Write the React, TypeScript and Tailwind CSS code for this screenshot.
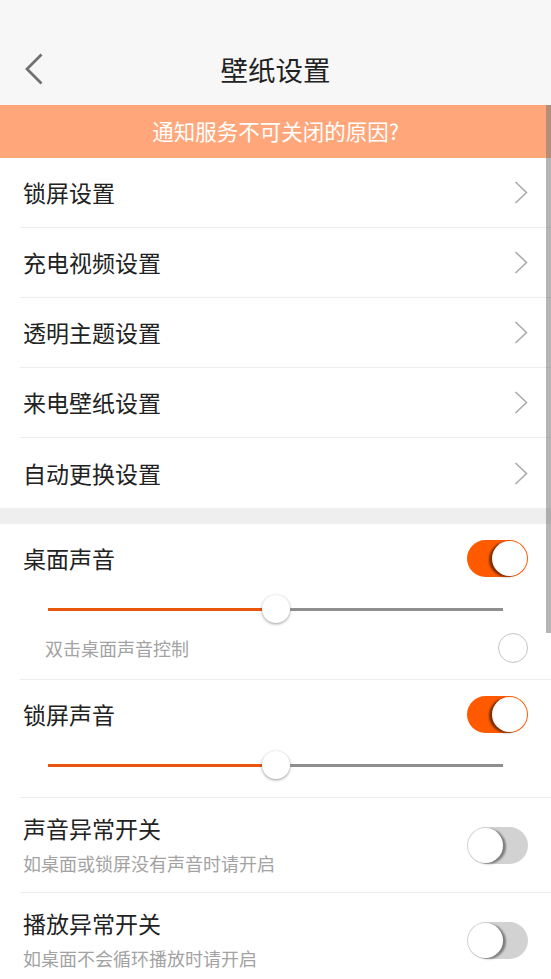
import { useState } from "react";

const font = { fontFamily: '"Noto Sans CJK SC", "Noto Sans", sans-serif' };

const links = ["锁屏设置", "充电视频设置", "透明主题设置", "来电壁纸设置", "自动更换设置"];

function Chevron() {
  return (
    <svg width="14" height="23" viewBox="0 0 14 23" fill="none">
      <path d="M1.5 1 L12.5 11.5 L1.5 22" stroke="#ababab" strokeWidth="1.6" />
    </svg>
  );
}

function Toggle({ on, onClick }: { on: boolean; onClick: () => void }) {
  return (
    <button
      onClick={onClick}
      className={
        "relative h-[37px] w-[61px] shrink-0 rounded-full " + (on ? "bg-[#ff5a00]" : "bg-[#d2d2d2]")
      }
    >
      <span
        className={
          "absolute top-[1px] h-[35px] w-[35px] rounded-full bg-white " +
          (on
            ? "right-[1px] shadow-[-3px_1px_2px_rgba(0,0,0,0.5)]"
            : "left-[1px] shadow-[3px_1px_2px_rgba(0,0,0,0.4)]")
        }
      />
    </button>
  );
}

function Slider() {
  return (
    <div className="flex h-[30px] items-center pl-[48px] pr-[48px]">
      <div className="h-[3px] flex-1 bg-[#e9560e]" />
      <div className="h-[28px] w-[28px] shrink-0 rounded-full bg-white shadow-[0_1px_3px_rgba(0,0,0,0.4)]" />
      <div className="h-[3px] flex-1 bg-[#8f8f8f]" />
    </div>
  );
}

function SwitchRow({
  title,
  sub,
  on,
  onClick,
  last,
}: {
  title: string;
  sub: string;
  on: boolean;
  onClick: () => void;
  last?: boolean;
}) {
  return (
    <div className="pl-[20px]">
      <div
        className={
          "flex h-[95px] items-center justify-between pl-[3px] pr-[23px] " +
          (last ? "" : "border-b border-[#ececec]")
        }
      >
        <div className="flex flex-col">
          <span className="text-[23px] leading-[30px]">{title}</span>
          <span className="mt-[5px] text-[18px] leading-[30px] text-[#a3a3a3]">{sub}</span>
        </div>
        <Toggle on={on} onClick={onClick} />
      </div>
    </div>
  );
}

export default function App() {
  const [desk, setDesk] = useState(true);
  const [lock, setLock] = useState(true);
  const [snd, setSnd] = useState(false);
  const [play, setPlay] = useState(false);
  const [dbl, setDbl] = useState(false);

  return (
    <div className="relative h-[979px] w-[551px] overflow-hidden bg-white text-[#222]" style={font}>
      {/* header */}
      <div className="flex h-[105px] items-end bg-[#f7f7f7] pb-[18px]">
        <div className="relative flex h-[34px] w-full items-center justify-center">
          <svg className="absolute left-[24px] top-[0px]" width="20" height="32" viewBox="0 0 20 32" fill="none">
            <path d="M17.5 1.5 L3 16 L17.5 30.5" stroke="#707070" strokeWidth="2.8" />
          </svg>
          <span className="text-[27.5px] leading-none">壁纸设置</span>
        </div>
      </div>

      <div className="flex h-[53px] items-center justify-center bg-[#ffa77b] text-[21.5px] text-white">
        通知服务不可关闭的原因?
      </div>

      <div>
        {links.map((t, i) => (
          <div key={t} className="pl-[20px]">
            <div
              className={
                "flex h-[70px] items-center justify-between pl-[3px] pr-[23px] " +
                (i < links.length - 1 ? "border-b border-[#ececec]" : "")
              }
            >
              <span className="text-[23px]">{t}</span>
              <Chevron />
            </div>
          </div>
        ))}
      </div>

      <div className="h-[16px] bg-[#efefef]" />

      {/* desk sound */}
      <div className="pl-[20px]">
        <div className="border-b border-[#ececec] pb-[16px]">
          <div className="flex h-[68px] items-center justify-between pl-[3px] pr-[23px]">
            <span className="text-[23px]">桌面声音</span>
            <Toggle on={desk} onClick={() => setDesk(!desk)} />
          </div>
          <div className="-ml-[20px] mt-[2px]">
            <Slider />
          </div>
          <div className="mt-[9px] flex h-[30px] items-center justify-between pl-[25px] pr-[23px]">
            <span className="text-[18px] text-[#a3a3a3]">双击桌面声音控制</span>
            <button
              onClick={() => setDbl(!dbl)}
              className={
                "h-[30px] w-[30px] rounded-full border " +
                (dbl ? "border-[#ff5a00] bg-[#ff5a00]" : "border-[#c4c4c4]")
              }
            />
          </div>
        </div>
      </div>

      {/* lock sound */}
      <div className="pl-[20px]">
        <div className="border-b border-[#ececec] pb-[17px]">
          <div className="flex h-[68px] items-center justify-between pl-[3px] pr-[23px]">
            <span className="text-[23px]">锁屏声音</span>
            <Toggle on={lock} onClick={() => setLock(!lock)} />
          </div>
          <div className="-ml-[20px] mt-[2px]">
            <Slider />
          </div>
        </div>
      </div>

      <SwitchRow title="声音异常开关" sub="如桌面或锁屏没有声音时请开启" on={snd} onClick={() => setSnd(!snd)} />
      <SwitchRow title="播放异常开关" sub="如桌面不会循环播放时请开启" on={play} onClick={() => setPlay(!play)} last />

      {/* scrollbar */}
      <div className="absolute right-0 top-[105px] h-[528px] w-[5px] bg-[rgba(120,120,120,0.55)]" />
    </div>
  );
}
